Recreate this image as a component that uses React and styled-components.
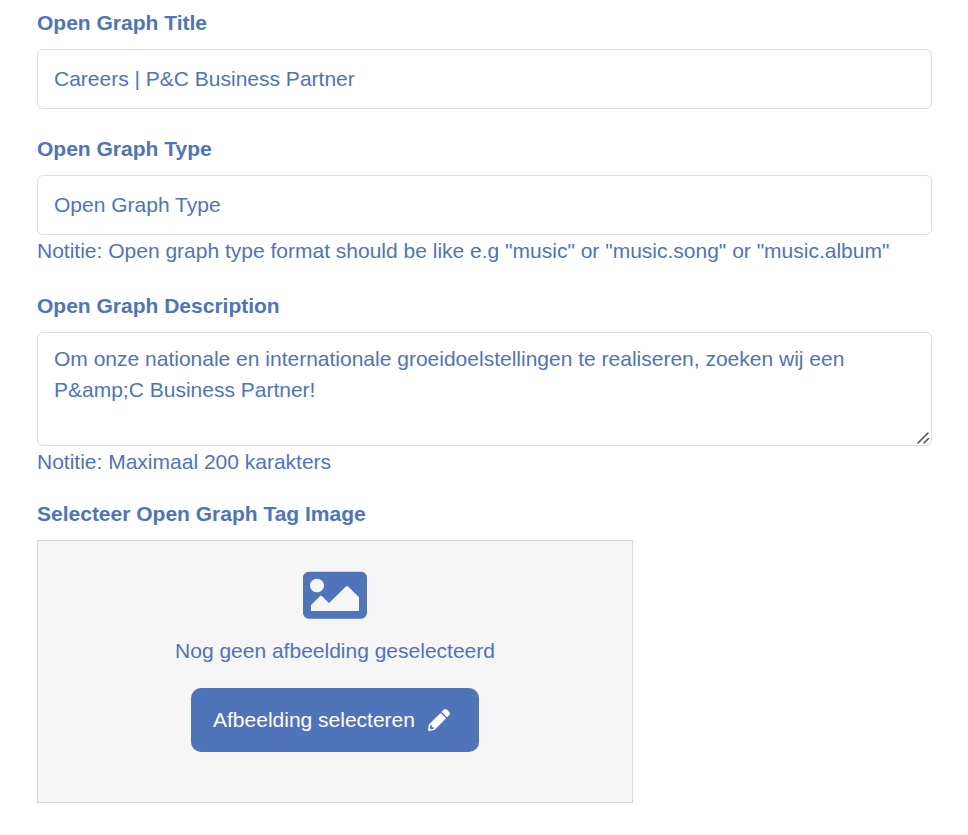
import React from "react";
import styled, { createGlobalStyle } from "styled-components";

const BLUE = "#4f74b9";

const grip = encodeURIComponent(
  '<svg xmlns="http://www.w3.org/2000/svg" width="15" height="15"><path d="M2 13 12 3M8 13 12.5 8.5" stroke="#555" stroke-width="1.6" stroke-linecap="round" fill="none"/></svg>'
);

const Global = createGlobalStyle`
  html, body { margin: 0; padding: 0; background: #fff; }
  body { font-family: "Liberation Sans", Arial, sans-serif; color: ${BLUE}; }
`;

const Page = styled.form`
  display: flex;
  flex-direction: column;
  width: 895px;
  padding: 10px 0 32px 37px;
`;

const Field = styled.div`
  display: flex;
  flex-direction: column;
  margin-bottom: ${(p) => p.$gap}px;
`;

const Label = styled.label`
  font-size: 21px;
  font-weight: 700;
  line-height: 26px;
  margin-bottom: 13px;
`;

const controlStyles = `
  box-sizing: border-box;
  width: 100%;
  padding: 14px 16px;
  border: 1px solid #dcdfe6;
  border-radius: 6px;
  background: #fff;
  color: ${BLUE};
  font-family: "Liberation Sans", Arial, sans-serif;
  font-size: 21px;
  line-height: 30px;
  outline: none;
  &::placeholder { color: ${BLUE}; opacity: 1; }
`;

const TextInput = styled.input`
  ${controlStyles}
  display: block;
  height: 60px;
`;

const TextArea = styled.textarea`
  ${controlStyles}
  display: block;
  height: 114px;
  padding-top: 10px;
  line-height: 31px;
  resize: vertical;
  &::-webkit-resizer {
    background: url("data:image/svg+xml,${grip}") no-repeat center;
  }
`;

const Note = styled.small`
  font-size: 21px;
  line-height: 32px;
  height: 32px;
`;

const Dropzone = styled.div`
  box-sizing: border-box;
  width: 596px;
  height: 263px;
  display: flex;
  flex-direction: column;
  align-items: center;
  padding-top: 23px;
  border: 1px solid #d9d9d9;
  background: #f6f6f6;
`;

const PictureSvg = styled.svg`
  display: block;
  width: 64px;
  height: 62.5px;
  fill: ${BLUE};
`;

const EmptyText = styled.p`
  margin: 11.5px 0 0;
  font-size: 21px;
  line-height: 26px;
`;

const SelectButton = styled.button`
  display: flex;
  align-items: center;
  gap: 13px;
  box-sizing: border-box;
  width: 288px;
  height: 64px;
  margin-top: 24px;
  padding: 0 0 0 22px;
  border: 0;
  border-radius: 10px;
  background: ${BLUE};
  color: #fff;
  font-family: "Liberation Sans", Arial, sans-serif;
  font-size: 21px;
  cursor: pointer;
`;

const PencilSvg = styled.svg`
  width: 22px;
  height: 22px;
  fill: #fff;
`;

const PictureIcon = () => (
  <PictureSvg viewBox="0 0 512 512" preserveAspectRatio="none" aria-hidden="true">
    <path d="M464 448H48c-26.51 0-48-21.49-48-48V112c0-26.51 21.49-48 48-48h416c26.51 0 48 21.49 48 48v288c0 26.51-21.49 48-48 48zM112 120c-30.928 0-56 25.072-56 56s25.072 56 56 56 56-25.072 56-56-25.072-56-56-56zM64 384h384V272l-87.515-87.515c-4.686-4.686-12.284-4.686-16.971 0L208 320l-55.515-55.515c-4.686-4.686-12.284-4.686-16.971 0L64 336v48z" />
  </PictureSvg>
);

const PencilIcon = () => (
  <PencilSvg viewBox="0 0 512 512" aria-hidden="true">
    <path d="M497.9 142.1l-46.1 46.1c-4.7 4.7-12.3 4.7-17 0l-111-111c-4.7-4.7-4.7-12.3 0-17l46.1-46.1c18.7-18.7 49.1-18.7 67.9 0l60.1 60.1c18.8 18.7 18.8 49.1 0 67.9zM284.2 99.8L21.6 362.4.4 483.9c-2.9 16.4 11.4 30.6 27.8 27.8l121.5-21.3 262.6-262.6c4.7-4.7 4.7-12.3 0-17l-111-111c-4.8-4.7-12.4-4.7-17.1 0zM88 424h48v36.3l-64.5 11.3-31.1-31.1L51.7 376H88v48z" />
  </PencilSvg>
);

export default function App() {
  return (
    <Page onSubmit={(e) => e.preventDefault()}>
      <Global />
      <Field $gap={27}>
        <Label htmlFor="og-title">Open Graph Title</Label>
        <TextInput id="og-title" readOnly value="Careers | P&C Business Partner" />
      </Field>
      <Field $gap={26}>
        <Label htmlFor="og-type">Open Graph Type</Label>
        <TextInput id="og-type" readOnly placeholder="Open Graph Type" />
        <Note>Notitie: Open graph type format should be like e.g "music" or "music.song" or "music.album"</Note>
      </Field>
      <Field $gap={23}>
        <Label htmlFor="og-desc">Open Graph Description</Label>
        <TextArea
          id="og-desc"
          readOnly
          value={"Om onze nationale en internationale groeidoelstellingen te realiseren, zoeken wij een P&amp;C Business Partner!"}
        />
        <Note>Notitie: Maximaal 200 karakters</Note>
      </Field>
      <Field $gap={0}>
        <Label>Selecteer Open Graph Tag Image</Label>
        <Dropzone>
          <PictureIcon />
          <EmptyText>Nog geen afbeelding geselecteerd</EmptyText>
          <SelectButton type="button">
            Afbeelding selecteren
            <PencilIcon />
          </SelectButton>
        </Dropzone>
      </Field>
    </Page>
  );
}
